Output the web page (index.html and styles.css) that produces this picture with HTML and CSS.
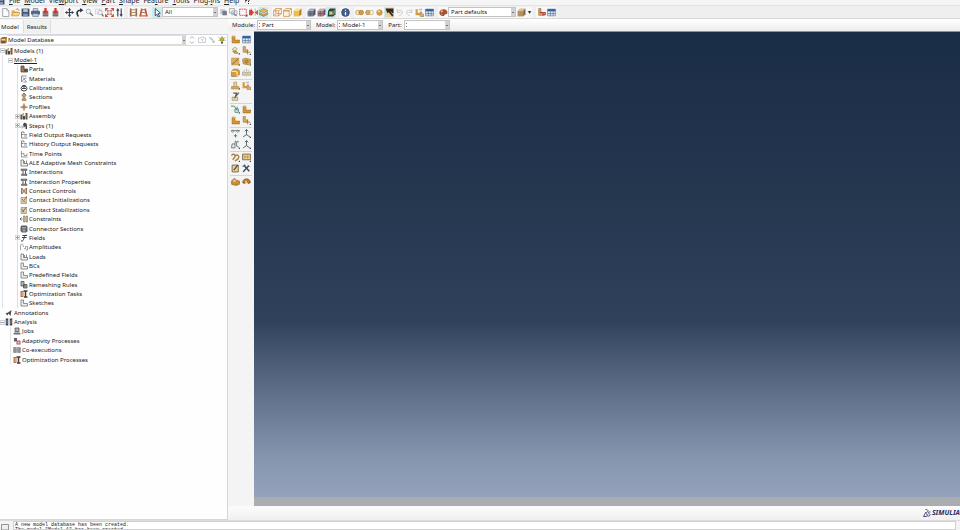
FILE: index.html
```html
<!DOCTYPE html>
<html lang="en">

<head>
    <meta charset="UTF-8">
    <meta name="viewport" content="width=device-width, initial-scale=1.0">
    <title>Model Database</title>
    <link rel="stylesheet" href="styles.css">
</head>

<body>
    <!-- icon sprite -->
    <svg class="sprite" aria-hidden="true">
        <symbol id="new" viewBox="0 0 16 16"><path d="M3 1h7l4 4v10H3z" fill="#fff" stroke="#8d949e" stroke-width="1.5"/><path d="M10 1v4h4" fill="none" stroke="#8d949e"/></symbol>
        <symbol id="open" viewBox="0 0 16 16"><path d="M1 4h5l1 2h6v8H1z" fill="#e9b44b"/><path d="M4 8h12l-3 6H1z" fill="#f7d988" stroke="#b8822a"/><path d="M9 3c2-3 5-1 5 2" fill="none" stroke="#c45434" stroke-width="1.5"/></symbol>
        <symbol id="save" viewBox="0 0 16 16"><path d="M1 1h14v14H1z" fill="#44546f"/><path d="M4 2h8v5H4z" fill="#b9c7de"/><path d="M4 10h8v5H4z" fill="#8798b5"/></symbol>
        <symbol id="print" viewBox="0 0 16 16"><path d="M4 1h8v5H4z" fill="#cfd8e8" stroke="#51617f"/><rect x="0" y="5" width="16" height="7" rx="2" fill="#52648a"/><path d="M3 10h10v5H3z" fill="#c4cee2" stroke="#51617f"/></symbol>
        <symbol id="db" viewBox="0 0 16 16"><path d="M3 6h10v9H3z" fill="#6d5c62"/><path d="M3 9h10M3 12h10" stroke="#c7bcbc"/><path d="M6 0h4v5h3L8 10 3 5h3z" fill="#d2322e"/></symbol>
        <symbol id="pan" viewBox="0 0 16 16"><path d="M8 1v14M1 8h14" stroke="#3a4256" stroke-width="2"/><path d="M8 0l3 4H5zM8 16l3-4H5zM0 8l4-3v6zM16 8l-4-3v6z" fill="#3a4256"/></symbol>
        <symbol id="rotate" viewBox="0 0 16 16"><path d="M6 15C1 9 4 4 10 4" fill="none" stroke="#2f3442" stroke-width="3"/><path d="M9 0l6 4-6 4z" fill="#2f3442"/></symbol>
        <symbol id="lens" viewBox="0 0 16 16"><circle cx="6" cy="6" r="4" fill="#eef2f8" stroke="#a7adba" stroke-width="1.5"/><path d="M9 9l5 5" stroke="#7c6d67" stroke-width="2.5"/></symbol>
        <symbol id="lensbox" viewBox="0 0 16 16"><path d="M1 2h10v8H1z" fill="none" stroke="#9ba1ad" stroke-dasharray="2 1"/><circle cx="9" cy="8" r="4" fill="#eef2f8" stroke="#9299a8"/><path d="M12 11l3 4" stroke="#7c6d67" stroke-width="2.5"/></symbol>
        <symbol id="fit" viewBox="0 0 16 16"><path d="M0 0h6L0 6zM16 0v6l-6-6zM0 16v-6l6 6zM16 16h-6l6-6z" fill="#d63e2e"/><path d="M1 1l14 14M15 1L1 15" stroke="#d66452" stroke-width="2"/><path d="M5 5h6v6H5z" fill="#f5e3df" stroke="#a8564a"/></symbol>
        <symbol id="updown" viewBox="0 0 16 16"><path d="M5 15V3M11 1v12" stroke="#333d52" stroke-width="2"/><path d="M5 0l3 5H2zM11 16l3-5H8z" fill="#333d52"/></symbol>
        <symbol id="ortho" viewBox="0 0 16 16"><path d="M3 1v14M13 1v14" stroke="#8f6a50" stroke-width="3"/><path d="M3 3h10M3 8h10M3 13h10" stroke="#c08a5e" stroke-width="2"/></symbol>
        <symbol id="persp" viewBox="0 0 16 16"><path d="M5 1L2 15M11 1l3 14" stroke="#a3593f" stroke-width="3"/><path d="M4 3h8M3 8h10M1 14h14" stroke="#c96a45" stroke-width="2"/></symbol>
        <symbol id="cursor" viewBox="0 0 16 16"><path d="M4 1l9 8-4 1 3 5-3 1-2-5-3 3z" fill="#fff" stroke="#1c3b57" stroke-width="1.5"/></symbol>
        <symbol id="filter" viewBox="0 0 16 16"><path d="M2 2h9v9H2z" fill="#c9cbd0"/><path d="M6 5h8v8H6z" fill="#777d88"/></symbol>
        <symbol id="pick" viewBox="0 0 16 16"><path d="M1 1h9v8H1zM5 5h9v7H5z" fill="none" stroke="#9298a4" stroke-width="1.3"/><path d="M8 8l6 6-4-1z" fill="#a6abb5" stroke="#6f7683"/></symbol>
        <symbol id="search" viewBox="0 0 16 16"><path d="M2 2l6 7M6 3l7 9" stroke="#b3b7be" stroke-width="2"/><path d="M9 9l5 5-5-1z" fill="#a6abb5"/></symbol>
        <symbol id="dash" viewBox="0 0 16 16"><path d="M1 2h12v11H1z" fill="none" stroke="#bc4540" stroke-width="1.5" stroke-dasharray="3 1"/><path d="M15 15v-4l-4 4z" fill="#333"/></symbol>
        <symbol id="redarrows" viewBox="0 0 16 16"><path d="M0 3h5l4 5-4 5H0z" fill="#d34b3c"/><path d="M16 3l-6 5 6 5z" fill="#dd5a42"/><path d="M4 1v13M11 1v13" stroke="#ad2d27" stroke-dasharray="2 1"/></symbol>
        <symbol id="layers" viewBox="0 0 16 16"><path d="M0 5l8-4 8 4-8 4z" fill="#e9b452" stroke="#a5793c"/><path d="M0 8l8 4 8-4v3l-8 4-8-4z" fill="#c3a15c" stroke="#7c7a4c"/></symbol>
        <symbol id="database" viewBox="0 0 16 16"><path d="M1 5l4-3h10v9l-4 4H1z" fill="#9b6a35"/><path d="M3 6h7v3H3z" fill="#f1d9a4"/><path d="M3 11h7v2H3z" fill="#4a4038"/><path d="M11 5l3-2v7l-3 3z" fill="#c99a52"/></symbol>
        <symbol id="wire" viewBox="0 0 16 16"><path d="M1 5h9v9H1zM5 1h10v9H5zM1 5l4-4M10 5l5-4M10 14l5-4M1 14l4-4" fill="none" stroke="#d08a40" stroke-width="1.3"/></symbol>
        <symbol id="hidden" viewBox="0 0 16 16"><path d="M1 5h10v10H1zM1 5l4-4h10l-4 4zM11 15l4-4V1" fill="#fdf3df" stroke="#cd8d3e" stroke-width="1.3"/></symbol>
        <symbol id="shaded" viewBox="0 0 16 16"><path d="M1 5h10v10H1z" fill="#efbd4d"/><path d="M1 5l4-4h10l-4 4z" fill="#f9df91"/><path d="M11 5l4-4v10l-4 4z" fill="#b77a28"/></symbol>
        <symbol id="mesh" viewBox="0 0 16 16"><path d="M1 5h10v10H1z" fill="#777e8d"/><path d="M1 5l4-4h10l-4 4z" fill="#a4a9b5"/><path d="M11 5l4-4v10l-4 4z" fill="#4a5263"/><path d="M1 10h10l4-4M6 5v10" fill="none" stroke="#505a6c"/></symbol>
        <symbol id="mesh2" viewBox="0 0 16 16"><path d="M1 5h10v10H1z" fill="#a67b84"/><path d="M1 5l4-4h10l-4 4z" fill="#c9a9ad"/><path d="M11 5l4-4v10l-4 4z" fill="#645766"/><path d="M1 10h10l4-4M6 5v10" fill="none" stroke="#5c4a59"/></symbol>
        <symbol id="mesh3" viewBox="0 0 16 16"><path d="M2 5l3-4h10v10l-4 4H1z" fill="#27463e"/><path d="M4 6h6v6H4z" fill="#d8c27e"/><path d="M11 5l3-3v8l-3 3z" fill="#6e9278"/></symbol>
        <symbol id="info" viewBox="0 0 16 16"><circle cx="8" cy="8" r="7" fill="#405e8e" stroke="#283d62"/><path d="M8 3v2M8 7v6" stroke="#fff" stroke-width="2.2"/></symbol>
        <symbol id="bool" viewBox="0 0 16 16"><circle cx="5" cy="8" r="4" fill="#fae3b4" stroke="#ae8041"/><circle cx="11" cy="8" r="4" fill="#d99a39" stroke="#8c632f"/></symbol>
        <symbol id="bool2" viewBox="0 0 16 16"><circle cx="11" cy="8" r="4" fill="#fff7e5" stroke="#ae9160"/><circle cx="5" cy="8" r="4" fill="#deaa50" stroke="#a27639"/></symbol>
        <symbol id="ball" viewBox="0 0 16 16"><circle cx="8" cy="8" r="5" fill="#d99d36" stroke="#a8814c"/><circle cx="7" cy="6" r="2" fill="#f2d393"/></symbol>
        <symbol id="black" viewBox="0 0 16 16"><path d="M0 0h16v16H0z" fill="#f0cfa0"/><path d="M1 1h14v9L9 6 4 9z" fill="#2f2822"/><path d="M6 5l8 9" stroke="#2f2822" stroke-width="3"/></symbol>
        <symbol id="undo" viewBox="0 0 16 16"><path d="M4 7c2-5 10-4 9 2-1 3-4 4-6 5M4 2v6h6" fill="none" stroke="#c2c4c8" stroke-width="1.5"/></symbol>
        <symbol id="redo" viewBox="0 0 16 16"><path d="M12 7C10 2 2 3 3 9c1 3 4 4 6 5M12 2v6H6" fill="none" stroke="#c2c4c8" stroke-width="1.5"/></symbol>
        <symbol id="part" viewBox="0 0 16 16"><path d="M2 2h5v7h8v5H2z" fill="#d9952f" stroke="#936020"/><path d="M2 2l2-1h5L7 3zM7 9l2-2h7l-2 2z" fill="#f6d58a"/></symbol>
        <symbol id="parts" viewBox="0 0 16 16"><path d="M2 2h6v6h7v6H2z" fill="#a8793f" stroke="#4f4232" stroke-width="1.5"/><path d="M8 9h6v4H8z" fill="#57493a"/></symbol>
        <symbol id="partpair" viewBox="0 0 16 16"><path d="M1 2h4v7h4v4H1z" fill="#d89a42"/><path d="M9 7h3v4h4v4H9z" fill="#e6b667" stroke="#8e7049"/><path d="M7 3h3M11 1v3" stroke="#667"/></symbol>
        <symbol id="table" viewBox="0 0 16 16"><path d="M1 2h14v12H1z" fill="#e6ecf4" stroke="#4c6587"/><path d="M1 2h14v4H1z" fill="#285fa0"/><path d="M1 10h14M6 6v8M11 6v8" stroke="#5c7292" stroke-width="1.3"/></symbol>
        <symbol id="palette" viewBox="0 0 16 16"><path d="M1 6c3-6 14-5 14 2 0 4-4 2-5 4s-1 3-4 2c-5-1-6-5-5-8z" fill="#9b5438"/><circle cx="5" cy="6" r="2" fill="#edbf4c"/><circle cx="10" cy="5" r="2" fill="#db3c2f"/><circle cx="5" cy="11" r="1" fill="#dac9b0"/></symbol>
        <symbol id="cube" viewBox="0 0 16 16"><path d="M1 5h10v10H1z" fill="#b78e62"/><path d="M1 5l4-4h10l-4 4z" fill="#d8bd91"/><path d="M11 5l4-4v10l-4 4z" fill="#7e6550"/></symbol>
        <symbol id="round" viewBox="0 0 16 16"><path d="M1 6l3-4h7c3 0 4 3 4 5v4l-4 4H1z" fill="#d99c3c" stroke="#76684f"/><path d="M1 6h7c2 0 3 2 3 4v5" fill="none" stroke="#f7e3b0" stroke-width="2"/></symbol>
        <symbol id="partred" viewBox="0 0 16 16"><path d="M3 1h4v8h6v4H3z" fill="#dba16b" stroke="#965c31"/><path d="M5 8h10v4H9" fill="none" stroke="#a32925" stroke-width="1.5"/></symbol>
        <symbol id="split" viewBox="0 0 16 16"><path d="M2 1h4v6h4v4H2z" fill="#e0a95a" stroke="#966e3c"/><path d="M10 6v9M7 11h8" stroke="#a07a48" stroke-width="1.5"/><path d="M13 16h3v-3z" fill="#444"/></symbol>
        <symbol id="bulb" viewBox="0 0 16 16"><circle cx="8" cy="7" r="4" fill="#b1b536" stroke="#666b25"/><path d="M6 12h4v3H6z" fill="#4c4d31"/><path d="M1 3l2 1M15 3l-2 1M8 0v2M1 9h2M13 9h2" stroke="#8b8f36" stroke-width="1.5"/></symbol>
        <symbol id="spin" viewBox="0 0 16 16"><path d="M4 5l4-4 4 4M4 11l4 4 4-4" fill="none" stroke="#91969f" stroke-width="1.5"/></symbol>
        <symbol id="ghost" viewBox="0 0 16 16"><path d="M1 4h5l1-2h4v2h4v9H1z" fill="none" stroke="#aeb3bb" stroke-width="1.3"/><path d="M6 6l5 5M9 6v4" stroke="#9da3af"/></symbol>
        <symbol id="models" viewBox="0 0 16 16"><path d="M1 5h4v10H1zM6 8h4v7H6z" fill="#4b463f"/><path d="M11 2h4v13h-4z" fill="#5f5443"/><path d="M5 2h3v5H5z" fill="#c9a35c"/><path d="M2 7v6M12 4v8" stroke="#a4957a"/></symbol>
        <symbol id="doc" viewBox="0 0 16 16"><path d="M3 14V2h5v3M3 7h4M3 14h12" fill="none" stroke="#666b74" stroke-width="1.6"/><path d="M8 7h6M8 10h6" stroke="#737883" stroke-width="1.5"/></symbol>
        <symbol id="time" viewBox="0 0 16 16"><path d="M3 2v12h12M3 7h5v4h6V7" fill="none" stroke="#777c85" stroke-width="1.5"/></symbol>
        <symbol id="mat" viewBox="0 0 16 16"><path d="M3 14V2h10" fill="none" stroke="#666b74" stroke-width="1.5"/><path d="M5 13c1-5 4-7 8-7M6 5l7 9H7" fill="none" stroke="#737a86" stroke-width="1.5"/></symbol>
        <symbol id="calib" viewBox="0 0 16 16"><ellipse cx="8" cy="9" rx="6" ry="5" fill="#fff" stroke="#3f454e" stroke-width="2"/><path d="M5 3h6M8 2v7M4 9h8" stroke="#3f454e" stroke-width="2"/></symbol>
        <symbol id="sect" viewBox="0 0 16 16"><path d="M4 3h8v3h-2v6h2v3H4v-3h2V6H4z" fill="#c6a36e" stroke="#81603b"/><path d="M6 1h4" stroke="#966e42" stroke-width="2"/></symbol>
        <symbol id="prof" viewBox="0 0 16 16"><path d="M8 1v14M1 8h14" stroke="#9a704d" stroke-width="2.5"/><path d="M5 5h6v6H5z" fill="#af8159"/></symbol>
        <symbol id="steps" viewBox="0 0 16 16"><path d="M0 10h5M4 7l3 3-3 3" fill="none" stroke="#555"/><path d="M6 5c2-5 7-4 8 1v8h-3V8L8 11z" fill="#474a50"/></symbol>
        <symbol id="inter" viewBox="0 0 16 16"><path d="M2 2h12v3H2zM3 12h11v3H3z" fill="#8d8d8b" stroke="#484b50"/><path d="M6 5v7M11 5v7" stroke="#5a5d63" stroke-width="2"/></symbol>
        <symbol id="contact" viewBox="0 0 16 16"><path d="M2 2h3v12H2zM11 2h3v12h-3z" fill="#ac7545"/><path d="M5 3l6 10M11 3L5 13" stroke="#776652" stroke-width="1.7"/></symbol>
        <symbol id="contact2" viewBox="0 0 16 16"><path d="M2 3h11v12H2z" fill="#dfd0ae" stroke="#77716a"/><path d="M5 12L13 2M4 6l7 7" stroke="#cb7435" stroke-width="2"/><path d="M11 1h3v4z" fill="#b54d2f"/></symbol>
        <symbol id="contact3" viewBox="0 0 16 16"><path d="M2 3h11v12H2z" fill="#d9d0b0" stroke="#77716a"/><path d="M5 12l8-10M4 6l4 7" stroke="#8a7440" stroke-width="2"/></symbol>
        <symbol id="constr" viewBox="0 0 16 16"><path d="M0 8h5M3 5L0 8l3 3" fill="none" stroke="#4b5059" stroke-width="1.5"/><path d="M7 2h3v12H7zM12 2h3v12h-3z" fill="#d3c798" stroke="#655e4e"/></symbol>
        <symbol id="conn" viewBox="0 0 16 16"><path d="M3 1h10l2 3v9l-3 2H4l-3-3V4z" fill="#5c6065"/><path d="M4 4h8v3H4zM5 9h6v4H5z" fill="#a3a8ac"/></symbol>
        <symbol id="field" viewBox="0 0 16 16"><path d="M14 3c-4-2-5 1-6 5s-2 7-6 6M4 7h9M5 3h9" fill="none" stroke="#3f4349" stroke-width="2"/></symbol>
        <symbol id="amp" viewBox="0 0 16 16"><path d="M1 14V8c0-8 5-8 6 0M8 11h3V7h4v7h-4" fill="none" stroke="#777d87" stroke-width="1.4"/></symbol>
        <symbol id="load" viewBox="0 0 16 16"><path d="M2 2h5v7h8v5H2z" fill="#f3f2ed" stroke="#63676d" stroke-width="1.5"/><path d="M9 4v5M13 3v6" stroke="#63676d" stroke-width="1.5"/></symbol>
        <symbol id="bc" viewBox="0 0 16 16"><path d="M2 2h5v7h8v5H2z" fill="#efefed" stroke="#686c72" stroke-width="1.5"/></symbol>
        <symbol id="remesh" viewBox="0 0 16 16"><path d="M2 1h6v9H2zM7 7h7v7H7z" fill="#b8b9ba" stroke="#474b51" stroke-width="1.5"/><path d="M10 7v7M7 10h7" stroke="#474b51"/></symbol>
        <symbol id="opt" viewBox="0 0 16 16"><path d="M1 2h6v12H1z" fill="#bb7045"/><path d="M7 2h8M8 14h7M11 2v12" stroke="#443e3a" stroke-width="3"/><path d="M3 4h3v8H3z" fill="#d3a581"/></symbol>
        <symbol id="annot" viewBox="0 0 16 16"><path d="M1 9l5-2 7-5-2 12-4-5-2 4z" fill="#4a4b50"/></symbol>
        <symbol id="analysis" viewBox="0 0 16 16"><path d="M4 1v14M12 1v14" stroke="#3d4355" stroke-width="5"/><path d="M1 6h6M9 6h6M1 10h6M9 10h6" stroke="#cfd3dc"/></symbol>
        <symbol id="job" viewBox="0 0 16 16"><path d="M4 2h8v7H4z" fill="#afb2b8" stroke="#4e525a" stroke-width="1.5"/><path d="M2 11h12l1 4H1z" fill="#6e7177"/></symbol>
        <symbol id="adapt" viewBox="0 0 16 16"><path d="M2 2h6v7H2z" fill="#665d6b"/><path d="M7 7h8v8H7z" fill="#aa5960"/><path d="M9 9h4v4H9z" fill="#e2cdc9"/></symbol>
        <symbol id="coexec" viewBox="0 0 16 16"><path d="M1 3h6v10H1zM9 3h6v10H9z" fill="#a5a6a9" stroke="#73767b"/><path d="M4 3v10M12 3v10" stroke="#55595f"/></symbol>
        <symbol id="shell" viewBox="0 0 16 16"><path d="M2 6l5-4 4 3-3 4z" fill="#f4e7bf" stroke="#8d8252"/><path d="M3 9h6l4 4H6z" fill="#d7a74f" stroke="#8d692e"/><path d="M13 15h3v-3z" fill="#444"/></symbol>
        <symbol id="plane" viewBox="0 0 16 16"><path d="M1 2h13v12H1z" fill="#ddb15c" stroke="#b08a48"/><path d="M2 13L13 3" stroke="#785931" stroke-width="1.5"/><path d="M13 15h3v-3z" fill="#444"/></symbol>
        <symbol id="cut" viewBox="0 0 16 16"><path d="M1 4l5-2 9 2v8l-4 2-9-2z" fill="#dbad50" stroke="#8b6a36"/><circle cx="8" cy="8" r="3" fill="#c5903f" stroke="#7f633c"/><path d="M13 15h3v-3z" fill="#444"/></symbol>
        <symbol id="mirror" viewBox="0 0 16 16"><path d="M1 13V7h5v6zM10 13V7h5v6z" fill="#e4d0a2" stroke="#98917c"/><path d="M8 1v14M3 4h3M10 4h3" stroke="#837b71" stroke-dasharray="2 1"/></symbol>
        <symbol id="merge" viewBox="0 0 16 16"><path d="M1 10h13v4H1z" fill="#e0ad52" stroke="#997237"/><path d="M5 2h5v8H5z" fill="#efd293" stroke="#9b8148"/><path d="M13 15h3v-3z" fill="#444"/></symbol>
        <symbol id="edit" viewBox="0 0 16 16"><path d="M2 9h10v6H2z" fill="#ead19c" stroke="#8b8365"/><path d="M6 11L14 1M4 2h6l-2 5" fill="none" stroke="#5e5b4d" stroke-width="2"/></symbol>
        <symbol id="axis" viewBox="0 0 16 16"><path d="M8 1v9l-6 4M8 10l6 4M5 4l3-3 3 3" fill="none" stroke="#4a5c5d" stroke-width="1.6"/><path d="M13 16h3v-3z" fill="#444"/></symbol>
        <symbol id="points" viewBox="0 0 16 16"><path d="M0 3h16M8 9v6M5 12h6" fill="none" stroke="#587474" stroke-width="1.6"/><circle cx="3" cy="4" r="2" fill="none" stroke="#667b75"/><circle cx="12" cy="4" r="2" fill="none" stroke="#667b75"/></symbol>
        <symbol id="datum" viewBox="0 0 16 16"><path d="M0 2h6l5 8M11 3v4M7 7h6v6H7z" fill="none" stroke="#377d72" stroke-width="1.5"/><path d="M13 15h3v-3z" fill="#444"/></symbol>
        <symbol id="csys" viewBox="0 0 16 16"><path d="M2 7h5v7H1zM8 1l-1 6M10 3h4M10 3v8l4 2" fill="none" stroke="#5d7272" stroke-width="1.6"/><path d="M13 16h3v-3z" fill="#444"/></symbol>
        <symbol id="heal" viewBox="0 0 16 16"><path d="M1 5c2-5 7-3 6 2l-4 5M7 5c5-4 9 1 5 6l-5 3" fill="none" stroke="#a7803d" stroke-width="2.5"/><path d="M13 16h3v-3z" fill="#444"/></symbol>
        <symbol id="grid" viewBox="0 0 16 16"><path d="M1 2h14v10H1z" fill="#f0d493" stroke="#795d34" stroke-width="1.5"/><path d="M3 7h10M5 4v6M10 4v6" stroke="#987a44"/><path d="M13 16h3v-3z" fill="#444"/></symbol>
        <symbol id="note" viewBox="0 0 16 16"><path d="M2 2h11v12H2z" fill="#efd18b" stroke="#685a43" stroke-width="1.5"/><path d="M5 11l7-9" stroke="#3b424b" stroke-width="2"/></symbol>
        <symbol id="tools" viewBox="0 0 16 16"><path d="M2 14L12 3M4 3l9 10" stroke="#384658" stroke-width="2.5"/><path d="M1 4l4-3 2 4zM10 1l4 4" fill="#51647e" stroke="#51647e"/></symbol>
        <symbol id="solid" viewBox="0 0 16 16"><path d="M1 7l5-5 4 4 5 1v6l-6 2-8-2z" fill="#cb8c34" stroke="#7b5425"/><path d="M3 7l3-3 3 4-3 1z" fill="#efce84"/></symbol>
        <symbol id="solid2" viewBox="0 0 16 16"><path d="M1 10c0-9 14-9 14 0l-4 2-1-3H6l-1 3z" fill="#be7b2d" stroke="#70451d"/><circle cx="7" cy="8" r="2" fill="#f2bf65"/></symbol>
        <symbol id="ds" viewBox="0 0 16 16"><path d="M5 1c7 0 6 5 1 7M6 6L1 15h5c4-1 4-5 0-5M15 6c-5-1-5 3-2 4s1 5-4 4" fill="none" stroke="#293264" stroke-width="1.7"/></symbol>
        <symbol id="help" viewBox="0 0 16 16"><path d="M3 2l6 6H6v5z" fill="#222"/><path d="M10 3c4-3 5 2 1 5v2M11 12v2" fill="none" stroke="#222" stroke-width="2"/></symbol>
        <symbol id="message" viewBox="0 0 16 16"><path d="M1 1h14v11H1z" fill="#eee" stroke="#777" stroke-width="1.5"/><path d="M4 12v3h8v-3" fill="#aaa" stroke="#777"/></symbol>
    </svg>

    <nav class="menubar">
        <svg class="app-icon"><use href="#save"/></svg>
        <button><u>F</u>ile</button>
        <button><u>M</u>odel</button>
        <button>Vie<u>w</u>port</button>
        <button><u>V</u>iew</button>
        <button><u>P</u>art</button>
        <button><u>S</u>hape</button>
        <button>Fea<u>t</u>ure</button>
        <button><u>T</u>ools</button>
        <button>Plug-<u>i</u>ns</button>
        <button><u>H</u>elp</button>
        <button aria-label="What's this"><svg><use href="#help"/></svg></button>
    </nav>

    <div class="toolbar">
        <div class="group">
            <button aria-label="New"><svg><use href="#new"/></svg></button>
            <button aria-label="Open"><svg><use href="#open"/></svg></button>
            <button aria-label="Save"><svg><use href="#save"/></svg></button>
            <button aria-label="Print"><svg><use href="#print"/></svg></button>
            <button aria-label="Import"><svg><use href="#db"/></svg></button>
            <button aria-label="Export"><svg><use href="#db"/></svg></button>
        </div>
        <div class="group">
            <button aria-label="Pan"><svg><use href="#pan"/></svg></button>
            <button aria-label="Rotate"><svg><use href="#rotate"/></svg></button>
            <button aria-label="Magnify"><svg><use href="#lens"/></svg></button>
            <button aria-label="Box zoom"><svg><use href="#lensbox"/></svg></button>
            <button aria-label="Auto-fit"><svg><use href="#fit"/></svg></button>
            <button aria-label="Cycle views"><svg><use href="#updown"/></svg></button>
        </div>
        <div class="group">
            <button aria-label="Parallel"><svg><use href="#ortho"/></svg></button>
            <button aria-label="Perspective"><svg><use href="#persp"/></svg></button>
        </div>
        <div class="group">
            <button class="on" aria-label="Select"><svg><use href="#cursor"/></svg></button>
            <select class="select-filter" aria-label="Selection filter"><option>All</option></select>
            <button aria-label="Filter"><svg><use href="#filter"/></svg></button>
            <button aria-label="Pick"><svg><use href="#pick"/></svg></button>
            <button aria-label="Drag shape"><svg><use href="#dash"/></svg></button>
            <button aria-label="Inside and crossing"><svg><use href="#redarrows"/></svg></button>
            <button class="on" aria-label="Closest"><svg><use href="#layers"/></svg></button>
        </div>
        <div class="group">
            <button aria-label="Wireframe"><svg><use href="#wire"/></svg></button>
            <button aria-label="Hidden"><svg><use href="#hidden"/></svg></button>
            <button aria-label="Shaded"><svg><use href="#shaded"/></svg></button>
        </div>
        <div class="group">
            <button aria-label="Mesh"><svg><use href="#mesh"/></svg></button>
            <button aria-label="Mesh edges"><svg><use href="#mesh2"/></svg></button>
            <button class="on" aria-label="Geometry"><svg><use href="#mesh3"/></svg></button>
        </div>
        <div class="group">
            <button aria-label="Query"><svg><use href="#info"/></svg></button>
        </div>
        <div class="group">
            <button aria-label="Replace"><svg><use href="#bool"/></svg></button>
            <button aria-label="Remove"><svg><use href="#bool2"/></svg></button>
            <button aria-label="Intersect"><svg><use href="#ball"/></svg></button>
            <button class="on" aria-label="Either"><svg><use href="#black"/></svg></button>
            <button aria-label="Undo"><svg><use href="#undo"/></svg></button>
            <button aria-label="Redo"><svg><use href="#redo"/></svg></button>
            <button aria-label="Display group"><svg><use href="#partpair"/></svg></button>
            <button aria-label="Display manager"><svg><use href="#table"/></svg></button>
        </div>
        <div class="group">
            <button aria-label="Color code"><svg><use href="#palette"/></svg></button>
            <select class="select-color" aria-label="Color mapping"><option>Part defaults</option></select>
            <button aria-label="Translucency"><svg><use href="#cube"/></svg></button>
            <button class="drop" aria-label="More">▾</button>
        </div>
        <div class="group">
            <button aria-label="Part display"><svg><use href="#partred"/></svg></button>
            <button aria-label="Part manager"><svg><use href="#table"/></svg></button>
        </div>
    </div>

    <main class="workspace">
        <aside class="side">
            <div class="tabs">
                <button class="tab active">Model</button>
                <button class="tab">Results</button>
            </div>
            <div class="panel">
                <div class="database">
                    <svg><use href="#database"/></svg>
                    <select class="select-database" aria-label="Database"><option>Model Database</option></select>
                    <button aria-label="Move"><svg><use href="#spin"/></svg></button>
                    <button aria-label="Sets"><svg><use href="#ghost"/></svg></button>
                    <button aria-label="Search"><svg><use href="#search"/></svg></button>
                    <button aria-label="Tips"><svg><use href="#bulb"/></svg></button>
                </div>
                <ul class="tree">
                    <li class="root"><i class="toggle"></i><svg><use href="#models"/></svg>Models (1)</li>
                    <li class="branch trunk"><i class="toggle"></i><u>Model-1</u></li>
                    <li class="leaf"><i></i><svg><use href="#parts"/></svg>Parts</li>
                    <li class="leaf"><i></i><svg><use href="#mat"/></svg>Materials</li>
                    <li class="leaf"><i></i><svg><use href="#calib"/></svg>Calibrations</li>
                    <li class="leaf"><i></i><svg><use href="#sect"/></svg>Sections</li>
                    <li class="leaf"><i></i><svg><use href="#prof"/></svg>Profiles</li>
                    <li class="leaf"><i class="toggle closed"></i><svg><use href="#models"/></svg>Assembly</li>
                    <li class="leaf"><i class="toggle closed"></i><svg><use href="#steps"/></svg>Steps (1)</li>
                    <li class="leaf"><i></i><svg><use href="#doc"/></svg>Field Output Requests</li>
                    <li class="leaf"><i></i><svg><use href="#doc"/></svg>History Output Requests</li>
                    <li class="leaf"><i></i><svg><use href="#time"/></svg>Time Points</li>
                    <li class="leaf"><i></i><svg><use href="#load"/></svg>ALE Adaptive Mesh Constraints</li>
                    <li class="leaf"><i></i><svg><use href="#inter"/></svg>Interactions</li>
                    <li class="leaf"><i></i><svg><use href="#inter"/></svg>Interaction Properties</li>
                    <li class="leaf"><i></i><svg><use href="#contact"/></svg>Contact Controls</li>
                    <li class="leaf"><i></i><svg><use href="#contact2"/></svg>Contact Initializations</li>
                    <li class="leaf"><i></i><svg><use href="#contact3"/></svg>Contact Stabilizations</li>
                    <li class="leaf"><i></i><svg><use href="#constr"/></svg>Constraints</li>
                    <li class="leaf"><i></i><svg><use href="#conn"/></svg>Connector Sections</li>
                    <li class="leaf"><i class="toggle closed"></i><svg><use href="#field"/></svg>Fields</li>
                    <li class="leaf"><i></i><svg><use href="#amp"/></svg>Amplitudes</li>
                    <li class="leaf"><i></i><svg><use href="#load"/></svg>Loads</li>
                    <li class="leaf"><i></i><svg><use href="#bc"/></svg>BCs</li>
                    <li class="leaf"><i></i><svg><use href="#bc"/></svg>Predefined Fields</li>
                    <li class="leaf"><i></i><svg><use href="#remesh"/></svg>Remeshing Rules</li>
                    <li class="leaf"><i></i><svg><use href="#opt"/></svg>Optimization Tasks</li>
                    <li class="leaf"><i></i><svg><use href="#bc"/></svg>Sketches</li>
                    <li class="root"><i></i><svg><use href="#annot"/></svg>Annotations</li>
                    <li class="root"><i class="toggle"></i><svg><use href="#analysis"/></svg>Analysis</li>
                    <li class="branch"><i></i><svg><use href="#job"/></svg>Jobs</li>
                    <li class="branch"><i></i><svg><use href="#adapt"/></svg>Adaptivity Processes</li>
                    <li class="branch"><i></i><svg><use href="#coexec"/></svg>Co-executions</li>
                    <li class="branch"><i></i><svg><use href="#opt"/></svg>Optimization Processes</li>
                </ul>
            </div>
        </aside>

        <section class="content">
            <div class="context">
                <label for="module">Module:</label>
                <select id="module" class="context-select wide"><option>Part</option></select>
                <label for="model">Model:</label>
                <select id="model" class="context-select"><option>Model-1</option></select>
                <label for="part-name">Part:</label>
                <select id="part-name" class="context-select"><option></option></select>
            </div>
            <div class="stage">
                <div class="toolbox">
                    <div class="tools">
                        <button aria-label="Create part"><svg><use href="#part"/></svg></button>
                        <button aria-label="Part manager"><svg><use href="#table"/></svg></button>
                        <button aria-label="Solid"><svg><use href="#shell"/></svg></button>
                        <button aria-label="Shell"><svg><use href="#split"/></svg></button>
                        <button aria-label="Wire"><svg><use href="#plane"/></svg></button>
                        <button aria-label="Cut"><svg><use href="#cut"/></svg></button>
                        <button aria-label="Round"><svg><use href="#round"/></svg></button>
                        <button aria-label="Mirror"><svg><use href="#mirror"/></svg></button>
                    </div>
                    <div class="tools">
                        <button aria-label="Partition edge"><svg><use href="#merge"/></svg></button>
                        <button aria-label="Partition face"><svg><use href="#partpair"/></svg></button>
                        <button aria-label="Edit feature"><svg><use href="#edit"/></svg></button>
                    </div>
                    <div class="tools">
                        <button aria-label="Datum"><svg><use href="#datum"/></svg></button>
                        <button aria-label="Offset"><svg><use href="#part"/></svg></button>
                        <button aria-label="Extend"><svg><use href="#part"/></svg></button>
                        <button aria-label="Split"><svg><use href="#split"/></svg></button>
                    </div>
                    <div class="tools">
                        <button aria-label="Datum point"><svg><use href="#points"/></svg></button>
                        <button aria-label="Datum axis"><svg><use href="#axis"/></svg></button>
                        <button aria-label="Datum plane"><svg><use href="#csys"/></svg></button>
                        <button aria-label="Coordinate system"><svg><use href="#axis"/></svg></button>
                    </div>
                    <div class="tools">
                        <button aria-label="Repair"><svg><use href="#heal"/></svg></button>
                        <button aria-label="Mesh to geometry"><svg><use href="#grid"/></svg></button>
                        <button aria-label="Notes"><svg><use href="#note"/></svg></button>
                        <button aria-label="Options"><svg><use href="#tools"/></svg></button>
                    </div>
                    <div class="tools">
                        <button aria-label="Midsurface"><svg><use href="#solid"/></svg></button>
                        <button aria-label="Thickness"><svg><use href="#solid2"/></svg></button>
                    </div>
                </div>
                <div class="viewport"></div>
            </div>
            <div class="brand">
                <svg><use href="#ds"/></svg>
                <span>SIMULIA</span>
            </div>
        </section>
    </main>

    <footer class="messages">
        <button aria-label="Messages"><svg><use href="#message"/></svg></button>
        <div class="log">
            <p>A new model database has been created.</p>
            <p>The model "Model-1" has been created.</p>
        </div>
    </footer>
</body>

</html>
```
FILE: styles.css
```css
* {
    margin: 0;
    padding: 0;
    box-sizing: border-box;
}

body {
    height: 100vh;
    display: flex;
    flex-direction: column;
    overflow: hidden;
    background: #f3f3f3;
    color: #222;
    font-family: "Noto Sans", "Open Sans", sans-serif;
    font-size: 6px;
    line-height: 8px;
}

button,
select {
    font: inherit;
    color: inherit;
    border: none;
    background: none;
}

svg {
    width: 8px;
    height: 8px;
    display: block;
    flex: none;
}

.sprite {
    position: absolute;
    width: 0;
    height: 0;
}

/* menu */
.menubar {
    height: 6px;
    display: flex;
    align-items: flex-end;
    gap: 4px;
    background: #f5f5f5;
    border-bottom: 1px solid #e4e4e4;
    font-size: 7px;
    flex: none;
}

.menubar button {
    white-space: nowrap;
}

.menubar .app-icon {
    margin-left: -3px;
}

/* toolbar */
.toolbar {
    height: 13px;
    display: flex;
    align-items: center;
    gap: 4px;
    background: #efefef;
    border-bottom: 1px solid #d8d8d8;
    flex: none;
}

.group {
    display: flex;
    align-items: center;
    background: #f8f8f8;
}

.group button {
    width: 10px;
    height: 11px;
    display: flex;
    align-items: center;
    justify-content: center;
}

.group svg {
    width: 9px;
    height: 9px;
}

.group .on {
    background: #c9edf0;
}

.group .drop {
    width: 6px;
}

select {
    appearance: none;
    height: 10px;
    padding-left: 2px;
    border: 1px solid #c4c4c4;
    background:
        linear-gradient(#777, #777) right 1px center / 2px 1px no-repeat,
        linear-gradient(#d2d2d2, #d2d2d2) right / 4px 100% no-repeat,
        #fff;
}

.select-filter {
    width: 56px;
}

.select-color {
    width: 68px;
}

.workspace {
    flex: 1;
    min-height: 0;
    display: flex;
}

/* model tree */
.side {
    width: 228px;
    flex: none;
    display: flex;
    flex-direction: column;
}

.tabs {
    height: 15px;
    display: flex;
    align-items: center;
    background: #f5f5f5;
}

.tab {
    height: 13px;
    padding: 0 3px;
    border-right: 1px solid #ddd;
    background: #f0f0f0;
}

.tab.active {
    padding: 0 4px 0 1px;
    background: #fafafa;
}

.panel {
    flex: 1;
    min-height: 0;
    background: #fefefe;
    border: 1px solid #d5d5de;
    border-left: none;
}

.database {
    display: flex;
    align-items: center;
    gap: 1px;
    border-bottom: 1px solid #dcdce6;
}

.database .select-database {
    flex: 1;
    padding-left: 0;
    border-color: #ddd transparent;
}

.database > svg {
    margin-right: -2px;
}

.database button {
    width: 9px;
}

.tree {
    height: 60vh;
    display: flex;
    flex-direction: column;
    list-style: none;
}

.tree li {
    flex: 1;
    min-height: 0;
    display: flex;
    align-items: center;
    white-space: nowrap;
}

.tree i {
    width: 5px;
    height: 5px;
    flex: none;
}

.tree svg {
    margin-right: 1px;
}

.tree .toggle {
    border: 1px solid #cfd2d7;
    background: linear-gradient(#999, #999) center / 3px 1px no-repeat #fff;
}

.tree .closed {
    background:
        linear-gradient(#999, #999) center / 3px 1px no-repeat,
        linear-gradient(#999, #999) center / 1px 3px no-repeat,
        #fff;
}

.tree .branch {
    padding-left: 8px;
    background: linear-gradient(#e4e4e4, #e4e4e4) 10px 0 / 1px 100% no-repeat;
}

.tree .trunk {
    background: linear-gradient(#dde3ee, #dde3ee) 2px 0 / 1px 100% no-repeat;
}

.trunk u {
    margin-left: 1px;
}

.tree .leaf {
    padding-left: 15px;
    background:
        linear-gradient(#dde3ee, #dde3ee) 2px 0 / 1px 100% no-repeat,
        linear-gradient(#ddd, #ddd) 17px 0 / 1px 100% no-repeat;
}

/* module bar and canvas */
.content {
    flex: 1;
    min-width: 0;
    display: flex;
    flex-direction: column;
}

.context {
    height: 12px;
    display: flex;
    align-items: center;
    gap: 2px;
    padding-left: 4px;
    background: linear-gradient(#fff, #ededed);
}

.context-select {
    width: 46px;
    margin-right: 3px;
    padding-left: 4px;
    background:
        linear-gradient(#777, #777) right 1px center / 2px 1px no-repeat,
        linear-gradient(#d2d2d2, #d2d2d2) right / 4px 100% no-repeat,
        repeating-linear-gradient(#777 0 1px, #fff 1px 3px) 1px 2px / 1px 5px no-repeat,
        #fff;
}

.context-select.wide {
    width: 54px;
}

.stage {
    flex: 1;
    min-height: 0;
    display: flex;
}

.toolbox {
    width: 26px;
    padding: 3px 2px 0;
    flex: none;
    background: #f4f4f4;
}

.tools {
    display: grid;
    grid-template-columns: 11px 11px;
    grid-auto-rows: 11px;
}

.tools + .tools {
    margin-top: 1px;
    border-top: 1px solid #d5d5d5;
}

.tools button {
    display: flex;
    align-items: center;
    justify-content: center;
}

.tools svg {
    width: 9px;
    height: 9px;
}

.viewport {
    flex: 1;
    border-top: 1px solid #8b929c;
    border-bottom: 9px solid #a9adb0;
    background: linear-gradient(#1a2d47, #25374f 35%, #30425b 62%, #64738d 79%, #8594ad 91%, #94a3bb);
}

.brand {
    height: 14px;
    display: flex;
    align-items: center;
    justify-content: flex-end;
    gap: 1px;
    background: linear-gradient(#fcfcfc, #f0f0f0);
    color: #293264;
    font-size: 7px;
    font-style: italic;
    font-weight: 700;
}

/* message area */
.messages {
    height: 10px;
    display: flex;
    flex: none;
    border-top: 1px solid #ddd;
}

.messages button {
    width: 13px;
    padding: 3px 1px;
}

.log {
    flex: 1;
    margin-right: 4px;
    padding: 1px;
    overflow: hidden;
    border: 1px solid #d0d0d0;
    background: #fff;
    font-family: "Liberation Mono", monospace;
    font-size: 5px;
    line-height: 5px;
}
```
